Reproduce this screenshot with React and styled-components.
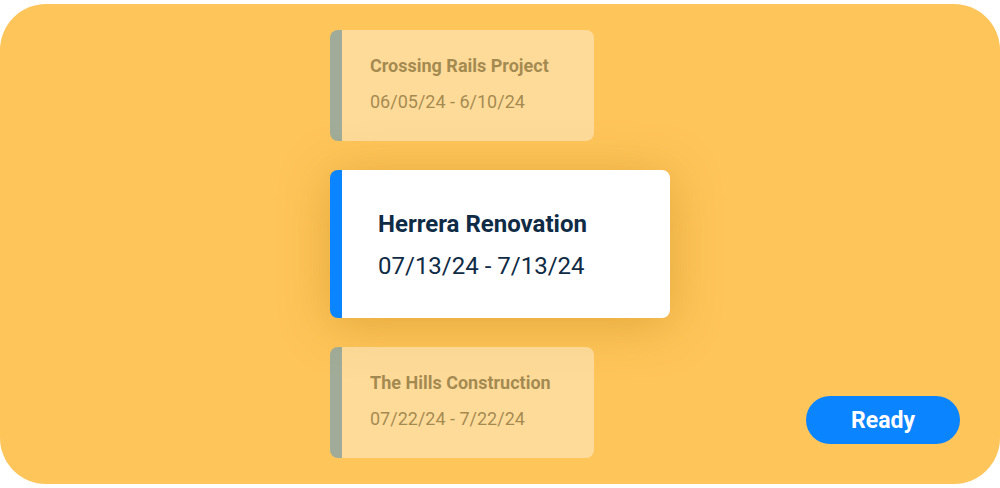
import React from 'react'
import styled, { createGlobalStyle } from 'styled-components'

const GlobalStyle = createGlobalStyle`
  html, body { margin: 0; padding: 0; background: #ffffff; }
  body { font-family: Roboto, "Liberation Sans", sans-serif; }
`

const projects = [
  { name: 'Crossing Rails Project', dates: '06/05/24 - 6/10/24' },
  { name: 'Herrera Renovation', dates: '07/13/24 - 7/13/24', active: true },
  { name: 'The Hills Construction', dates: '07/22/24 - 7/22/24' },
]

const App = () => {
  return (
    <>
      <GlobalStyle />
      <Page>
        <Panel>
          <List>
            {projects.map(p => (
              <Card key={p.name} $active={p.active}>
                <Name $active={p.active}>{p.name}</Name>
                <Dates $active={p.active}>{p.dates}</Dates>
              </Card>
            ))}
          </List>
          <Badge>Ready</Badge>
        </Panel>
      </Page>
    </>
  )
}

export default App

const Page = styled.div`
  width: 1000px;
  height: 488px;
  padding-top: 4px;
  box-sizing: border-box;
`

const Panel = styled.div`
  position: relative;
  height: 480px;
  background: #fec55a;
  border-radius: 46px;
  overflow: hidden;
`

const List = styled.div`
  display: flex;
  flex-direction: column;
  align-items: flex-start;
  padding: 26px 0 0 330px;
  gap: 29px;
`

const Card = styled.div`
  box-sizing: border-box;
  background: #ffffff;
  border-radius: 8px;
  border-left: 12px solid #0a84ff;
  width: ${p => (p.$active ? '340px' : '264px')};
  height: ${p => (p.$active ? '148px' : '111px')};
  padding: ${p => (p.$active ? '40px 0 0 36px' : '25px 0 0 28px')};
  display: flex;
  flex-direction: column;
  gap: ${p => (p.$active ? '14px' : '14px')};
  opacity: ${p => (p.$active ? 1 : 0.38)};
  box-shadow: ${p => (p.$active ? '0 6px 50px rgba(190, 130, 20, 0.45)' : 'none')};
`

const Name = styled.div`
  font-weight: 700;
  color: #0f2b45;
  font-size: ${p => (p.$active ? '24px' : '18px')};
  line-height: ${p => (p.$active ? '28px' : '22px')};
`

const Dates = styled.div`
  font-weight: 400;
  color: #0f2b45;
  font-size: ${p => (p.$active ? '24px' : '18px')};
  line-height: ${p => (p.$active ? '28px' : '22px')};
`

const Badge = styled.div`
  position: absolute;
  left: 806px;
  top: 392px;
  width: 154px;
  height: 48px;
  border-radius: 24px;
  background: #0a84ff;
  color: #ffffff;
  font-weight: 700;
  font-size: 23px;
  display: flex;
  align-items: center;
  justify-content: center;
`
